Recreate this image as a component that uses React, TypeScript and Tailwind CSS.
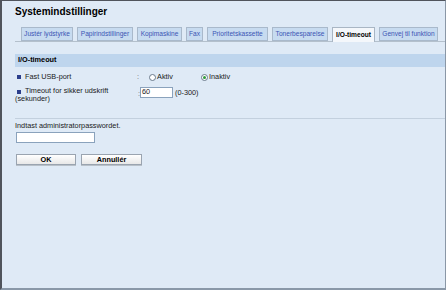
import { ReactNode } from 'react'

const TABS: { label: string; w: string }[] = [
  { label: 'Justér lydstyrke', w: 'w-[52px]' },
  { label: 'Papirindstillinger', w: 'w-[56px]' },
  { label: 'Kopimaskine', w: 'w-[45px]' },
  { label: 'Fax', w: 'w-[17px]' },
  { label: 'Prioritetskassette', w: 'w-[61px]' },
  { label: 'Tonerbesparelse', w: 'w-[56px]' },
  { label: 'I/O-timeout', w: 'w-[43px]' },
  { label: 'Genvej til funktion', w: 'w-[59px]' },
]

function Tab({ label, w, active }: { label: string; w: string; active?: boolean }) {
  return (
    <div
      className={
        (active
          ? 'h-[15px] border border-b-0 border-[#a9b6c4] bg-[#f4f7fb] text-black font-bold -mb-px '
          : 'h-[14px] border border-[#a9b9cb] bg-[#c7dbf0] text-[#3b55b4] ') +
        w +
        ' shrink-0 flex items-center justify-center whitespace-nowrap text-[6.6px]'
      }
    >
      {label}
    </div>
  )
}

function Radio({ checked, label }: { checked?: boolean; label: string }) {
  return (
    <div className="flex items-center gap-[1px]">
      <span className="w-[7px] h-[7px] rounded-full border border-[#6a7a8c] bg-white flex items-center justify-center">
        {checked ? <span className="w-[3px] h-[3px] rounded-full bg-[#2f9a3a]" /> : null}
      </span>
      <span>{label}</span>
    </div>
  )
}

function Bullet({ children }: { children: ReactNode }) {
  return (
    <div className="flex items-start">
      <span className="w-[4px] h-[4px] bg-[#2c3f8c] mt-[3px] ml-[2px] mr-[4px] shrink-0" />
      <span>{children}</span>
    </div>
  )
}

export default function App() {
  return (
    <div
      className="w-[446px] h-[290px] bg-[#dfeaf6] border-l-2 border-t border-[#50545c] border-r border-r-[#8a97a6] border-b-2 border-b-[#8a98a8] text-[7.3px] text-[#1a1a1a] overflow-hidden"
      style={{ fontFamily: '"Liberation Sans", Arial, sans-serif' }}
    >
      <div className="pl-[13px] pt-[4px] text-[10px] font-bold text-black leading-[13px]">Systemindstillinger</div>

      {/* tabs */}
      <div className="ml-[13px] mt-[9px] pl-[6px] flex items-end gap-[4px] border-b border-[#b4c0cc]">
        {TABS.map((t) => (
          <Tab key={t.label} label={t.label} w={t.w} active={t.label === 'I/O-timeout'} />
        ))}
      </div>

      {/* section */}
      <div className="ml-[13px] mt-[12px]">
        <div className="h-[13px] bg-[#bed5ed] flex items-center pl-[3px] font-bold text-black">I/O-timeout</div>

        <div className="flex items-center mt-[5px] h-[11px]">
          <div className="w-[122px]">
            <Bullet>Fast USB-port</Bullet>
          </div>
          <span className="text-[#666]">:</span>
          <div className="ml-[10px] w-[52px]">
            <Radio label="Aktiv" />
          </div>
          <Radio checked label="Inaktiv" />
        </div>

        <div className="flex items-start mt-[4px]">
          <div className="w-[123px] leading-[8px]">
            <Bullet>Timeout for sikker udskrift</Bullet>
            <div>(sekunder)</div>
          </div>
          <span className="text-[#666] mt-[2px]">:</span>
          <div className="w-[33px] h-[11px] bg-white border border-[#8aa2bc] flex items-center pl-[1px]">60</div>
          <span className="ml-[2px] mt-[1px]">(0-300)</span>
        </div>

        <div className="mt-[15px] border-t border-[#c3d0de]" />

        <div className="mt-[2px] leading-[9px]">Indtast administratorpasswordet.</div>
        <div className="ml-[1px] mt-[2px] w-[79px] h-[11px] bg-white border border-[#8aa2bc]" />

        <div className="flex gap-[5px] mt-[11px] ml-[1px]">
          <button className="w-[60px] h-[11px] border border-[#9aa4b0] bg-gradient-to-b from-white to-[#e8e8e8] font-bold text-black text-[7.3px] leading-[9px] shadow-[0_1px_0_#b8c0c8]">
            OK
          </button>
          <button className="w-[61px] h-[11px] border border-[#9aa4b0] bg-gradient-to-b from-white to-[#e8e8e8] font-bold text-black text-[7.3px] leading-[9px] shadow-[0_1px_0_#b8c0c8]">
            Annullér
          </button>
        </div>
      </div>
    </div>
  )
}
